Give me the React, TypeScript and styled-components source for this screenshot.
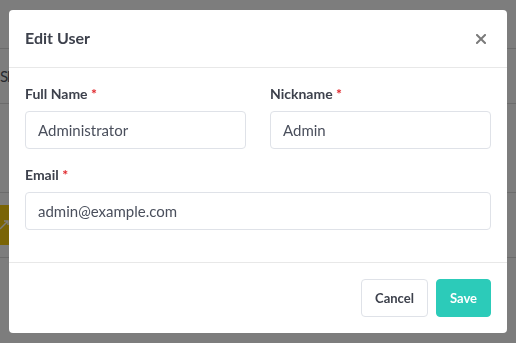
import * as React from 'react';
import styled, { createGlobalStyle } from 'styled-components';

const GlobalStyle = createGlobalStyle`
  html, body {
    margin: 0;
    padding: 0;
    width: 516px;
    height: 343px;
    overflow: hidden;
    background: #ffffff;
    font-family: Lato, "Noto Sans", sans-serif;
  }
  * {
    box-sizing: border-box;
  }
`;

const App = () => {
  return (
    <>
      <GlobalStyle />
      <Page>
        <PageBar />
        <PageRow $h={55}>
          <PageText>Sl</PageText>
        </PageRow>
        <PageRow $h={89} />
        <PageRow $h={65}>
          <WarnTag>
            <svg width="10" height="12" viewBox="0 0 10 12">
              <path d="M0 10L8 2M4 2h4v4" stroke="#fff" strokeWidth="1.4" fill="none" />
            </svg>
          </WarnTag>
        </PageRow>
      </Page>

      <Overlay>
        <Card>
          <Header>
            <Title>Edit User</Title>
            <CloseButton aria-label="close">
              <svg width="10" height="10" viewBox="0 0 10 10">
                <path d="M1 1L9 9M9 1L1 9" stroke="#7a7a7a" strokeWidth="2" strokeLinecap="square" />
              </svg>
            </CloseButton>
          </Header>

          <Body>
            <FieldRow>
              <Field>
                <Label>
                  Full Name <Req>*</Req>
                </Label>
                <Input defaultValue="Administrator" />
              </Field>
              <Field>
                <Label>
                  Nickname <Req>*</Req>
                </Label>
                <Input defaultValue="Admin" />
              </Field>
            </FieldRow>
            <Field>
              <Label>
                Email <Req>*</Req>
              </Label>
              <Input defaultValue="admin@example.com" />
            </Field>
          </Body>

          <Footer>
            <Button>Cancel</Button>
            <Button $primary>Save</Button>
          </Footer>
        </Card>
      </Overlay>
    </>
  );
};

export default App;

const Page = styled.div`
  width: 516px;
  height: 343px;
`;

const PageBar = styled.div`
  height: 49px;
  border-bottom: 1px solid #dcdcdc;
`;

const PageRow = styled.div<{ $h: number }>`
  display: flex;
  align-items: center;
  height: ${(p) => p.$h}px;
  border-bottom: 1px solid #dcdcdc;
`;

const PageText = styled.span`
  font-size: 15px;
  color: #4a4f5c;
  letter-spacing: -1px;
`;

const WarnTag = styled.div`
  display: flex;
  align-items: center;
  justify-content: flex-end;
  width: 10px;
  height: 40px;
  background: #f8cb00;
`;

const Overlay = styled.div`
  position: fixed;
  inset: 0;
  display: flex;
  align-items: center;
  justify-content: center;
  background: rgba(10, 10, 10, 0.53);
`;

const Card = styled.div`
  display: flex;
  flex-direction: column;
  width: 498px;
  background: #fff;
  border-radius: 4px;
  overflow: hidden;
`;

const Header = styled.header`
  display: flex;
  align-items: center;
  justify-content: space-between;
  padding: 16px 16px 17px 16px;
  border-bottom: 1px solid #e8e8e8;
`;

const Title = styled.h2`
  margin: 0;
  font-size: 16px;
  line-height: 24px;
  font-weight: 700;
  color: #3d414c;
`;

const CloseButton = styled.button`
  display: flex;
  align-items: center;
  justify-content: center;
  width: 20px;
  height: 20px;
  padding: 0;
  margin-top: 1px;
  border: none;
  background: none;
  cursor: pointer;
`;

const Body = styled.section`
  display: flex;
  flex-direction: column;
  gap: 16px;
  padding: 16px 16px 32px 16px;
  border-bottom: 1px solid #e8e8e8;
`;

const FieldRow = styled.div`
  display: grid;
  grid-template-columns: 1fr 1fr;
  column-gap: 24px;
`;

const Field = styled.div`
  display: flex;
  flex-direction: column;
  gap: 7px;
`;

const Label = styled.label`
  font-size: 14px;
  line-height: 20px;
  font-weight: 700;
  color: #3d414c;
`;

const Req = styled.span`
  color: #e0262b;
`;

const Input = styled.input`
  height: 38px;
  width: 100%;
  padding: 0 12px;
  border: 1px solid #dfe2e8;
  border-radius: 4px;
  font-family: Lato, "Noto Sans", sans-serif;
  font-size: 15px;
  color: #4a4f5c;
  outline: none;
`;

const Footer = styled.footer`
  display: flex;
  justify-content: flex-end;
  gap: 8px;
  padding: 16px;
`;

const Button = styled.button<{ $primary?: boolean }>`
  height: 38px;
  padding: 0 13px;
  border-radius: 4px;
  border: 1px solid ${(p) => (p.$primary ? '#2ccbb9' : '#dfe2e8')};
  background: ${(p) => (p.$primary ? '#2ccbb9' : '#fff')};
  color: ${(p) => (p.$primary ? '#fff' : '#3d414c')};
  font-family: Lato, "Noto Sans", sans-serif;
  font-size: 13px;
  font-weight: 700;
  cursor: pointer;
`;
